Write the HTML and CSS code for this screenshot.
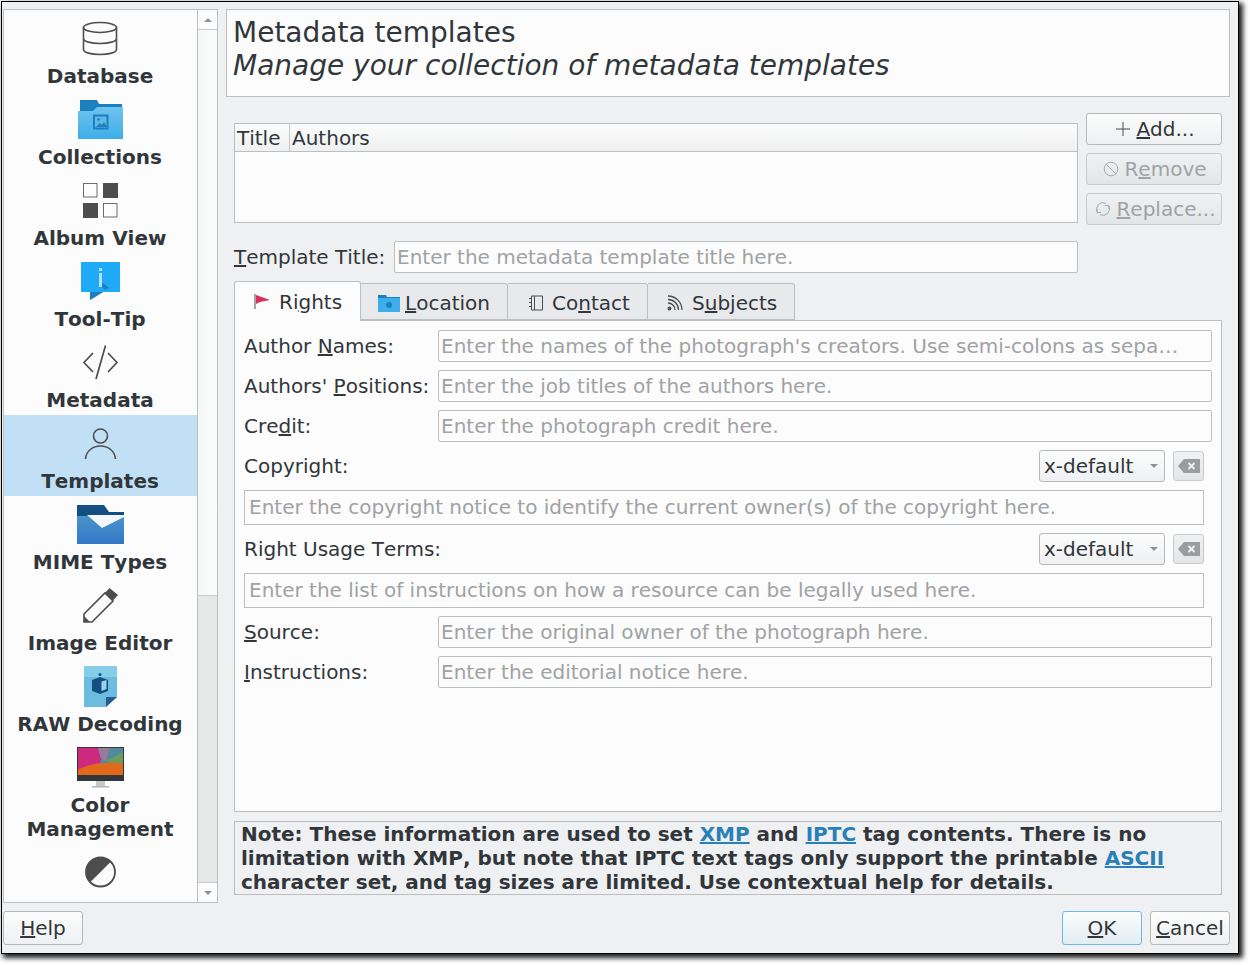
FILE: index.html
```html
<!DOCTYPE html>
<html lang="en">
<head>
<meta charset="utf-8">
<title>Metadata templates</title>
<link rel="stylesheet" href="styles.css">
</head>
<body>
<div class="window">
  <div class="top">
    <nav class="sidebar">
      <div class="list">
        <div class="item">
          <svg class="icon" viewBox="0 0 48 48" fill="none" stroke="#4d4d4d" stroke-width="1.6"><ellipse cx="24" cy="13.5" rx="16.5" ry="5"/><path d="M7.500 13.5V35.500c0 3 7.500 5 16.500 5s16.500-2 16.500-5V13.500M7.500 24.500c0 3 7.500 5 16.500 5s16.500-2 16.500-5"/></svg>
          <span>Database</span>
        </div>
        <div class="item">
          <svg class="icon" viewBox="0 0 48 48"><defs><linearGradient id="fold" x1="0" y1="0" x2="0" y2="1"><stop offset="0" stop-color="#70c2ee"/><stop offset="1" stop-color="#3daee9"/></linearGradient></defs><path d="M4 5H21L23 9H46V20H4Z" fill="#1d7fbf"/><path d="M2 16H17L21 12H47V44H2Z" fill="url(#fold)"/><rect x="18" y="20.500" width="13.500" height="13" fill="#5fb8e6" stroke="#1d7fbf" stroke-width="2"/><path d="M20 32l4-4 2 2 2-3 3 5z" fill="#1d7fbf"/><circle cx="22.500" cy="24.500" r="1.300" fill="#1d7fbf"/></svg>
          <span>Collections</span>
        </div>
        <div class="item">
          <svg class="icon" viewBox="0 0 48 48"><rect x="7.500" y="7.500" width="13.500" height="13.500" fill="none" stroke="#6b6b6b"/><rect x="27" y="7" width="15" height="15" fill="#4d4d4d"/><rect x="7" y="27" width="15" height="15" fill="#4d4d4d"/><rect x="27.500" y="27.500" width="13.500" height="13.500" fill="none" stroke="#6b6b6b"/></svg>
          <span>Album View</span>
        </div>
        <div class="item">
          <svg class="icon" viewBox="0 0 48 48"><path d="M5 5H44V35H27L14 43V35H5Z" fill="#1eaaf7"/><path d="M14 43L27 35H14Z" fill="#1d7fbf"/><path d="M24 28l3-2 6 5 -4 2z" fill="#1d7fbf"/><rect x="23" y="16" width="3" height="14" fill="#b3dff7"/><rect x="23" y="11" width="3" height="3" fill="#b3dff7"/></svg>
          <span>Tool-Tip</span>
        </div>
        <div class="item">
          <svg class="icon" viewBox="0 0 48 48" fill="none" stroke="#4d4d4d" stroke-width="1.700"><path d="M17 15L8 24.500L17 34M32 15L41 24.500L32 34M29.500 7.500L20 41"/></svg>
          <span>Metadata</span>
        </div>
        <div class="item selected">
          <svg class="icon" viewBox="0 0 48 48" fill="none" stroke="#4d4d4d" stroke-width="1.600"><circle cx="24.500" cy="17" r="7"/><path d="M9.500 40C10 32 17 27 24.500 27S39 32 39.500 40"/></svg>
          <span>Templates</span>
        </div>
        <div class="item">
          <svg class="icon" viewBox="0 0 48 48"><defs><linearGradient id="mime" x1="0" y1="0" x2="0" y2="1"><stop offset="0" stop-color="#4a94c9"/><stop offset="1" stop-color="#3278c8"/></linearGradient></defs><path d="M1 5H28L33 12H48V17H1Z" fill="#134f83"/><rect x="1" y="16" width="47" height="28" fill="url(#mime)"/><path d="M11 15H48V17L26 28Z" fill="#f4f7f9"/></svg>
          <span>MIME Types</span>
        </div>
        <div class="item">
          <svg class="icon" viewBox="0 0 48 48"><path d="M8 33L29 12L37 20L16 41H8Z" fill="none" stroke="#4d4d4d" stroke-width="1.600"/><path d="M33.500 7L42 14L37 19.500L29 12Z" fill="#4d4d4d"/><path d="M8 35L14 41H8Z" fill="#4d4d4d"/></svg>
          <span>Image Editor</span>
        </div>
        <div class="item">
          <svg class="icon" viewBox="0 0 48 48"><path d="M8 4H41V35L30 45H8Z" fill="#6bbcdf"/><rect x="8" y="4" width="33" height="11" fill="#85cde8"/><path d="M30 45V35H41Z" fill="#1d5f94"/><path d="M30 45A6 6 0 0 1 30 37Z" fill="#8fa9b8"/><path d="M16 18L24 15L32 18V29L24 32L16 29Z" fill="#134f83"/><path d="M25.500 19.500L30.500 18V27L25.500 29Z" fill="#9bd2ea"/><circle cx="24" cy="12.500" r="1.500" fill="#134f83"/></svg>
          <span>RAW Decoding</span>
        </div>
        <div class="item">
          <svg class="icon" viewBox="0 0 48 48"><rect x="1" y="4" width="47" height="34" fill="#31363b"/><rect x="2" y="5" width="45" height="27" fill="#4f8a9e"/><path d="M2 5H22L25 16L24 21L2 27Z" fill="#cd2a7f"/><path d="M22 5H34L30 18L25 16Z" fill="#9a7a9a"/><path d="M30 18L47 9V22L34 20Z" fill="#6e9a5e"/><path d="M2 32V27C12 21 30 18 47 21V32Z" fill="#e2691b"/><rect x="20" y="38" width="9" height="5" fill="#c8c9ca"/><rect x="16" y="43" width="17" height="1.500" fill="#b5b6b7"/></svg>
          <span>Color<br>Management</span>
        </div>
        <div class="item">
          <svg class="icon" viewBox="0 0 48 48"><circle cx="24.500" cy="24" r="14.500" fill="none" stroke="#4d4d4d" stroke-width="1.800"/><path d="M14.200 34.300A14.500 14.500 0 0 1 34.800 13.700Z" fill="#4d4d4d"/></svg>
        </div>
      </div>
      <div class="scrollbar">
        <div class="sb-btn"><i class="tri-up"></i></div>
        <div class="sb-thumb"></div>
        <div class="sb-track"></div>
        <div class="sb-btn sb-btn-end"><i class="tri-down"></i></div>
      </div>
    </nav>
    <main class="main">
      <header class="page-head">
        <div class="page-title">Metadata templates</div>
        <div class="page-sub">Manage your collection of metadata templates</div>
      </header>
      <div class="content">
        <div class="table-row">
          <div class="table">
            <div class="thead">
              <div class="th th-title">Title</div>
              <div class="th">Authors</div>
            </div>
          </div>
          <div class="side-buttons">
            <button class="btn side"><svg class="btn-icon" viewBox="0 0 16 16" fill="none" stroke="#4d4d4d"><path d="M8 1V15M1 8H15"/></svg><span><u>A</u>dd...</span></button>
            <button class="btn side disabled"><svg class="btn-icon" viewBox="0 0 16 16" fill="none" stroke="#a9abac"><circle cx="8" cy="8" r="6.800"/><path d="M3.200 3.200L12.800 12.800"/></svg><span>R<u>e</u>move</span></button>
            <button class="btn side disabled wide-gap"><svg class="btn-icon" viewBox="0 0 16 16" fill="none" stroke="#a9abac"><path d="M2.500 11.500A6.500 6.500 0 0 1 11 2.300M13.500 4.500A6.500 6.500 0 0 1 5 13.700M2 7.500V11.500H6M14 8.500V4.500H10"/></svg><span><u>R</u>eplace...</span></button>
          </div>
        </div>
        <div class="title-row">
          <label class="title-label"><u>T</u>emplate Title:</label>
          <input class="field" placeholder="Enter the metadata template title here.">
        </div>
        <div class="tabs">
          <div class="tab active"><svg class="tab-icon" viewBox="0 0 16 16"><path d="M1 0V15" stroke="#6b6b6b" stroke-width="1.200" fill="none"/><path d="M2 1L16 6L6 8L2 10Z" fill="#da2e5b"/></svg><span>Ri<u>g</u>hts</span></div>
          <div class="tab tab-location"><svg class="tab-icon folder" viewBox="0 0 22 18"><path d="M0 1H8L9 3H22V8H0Z" fill="#1d7fbf"/><path d="M0 4H22V18H0Z" fill="#3daee9"/><circle cx="11" cy="11" r="3" fill="#1d7fbf"/></svg><span><u>L</u>ocation</span></div>
          <div class="tab tab-contact"><svg class="tab-icon" viewBox="0 0 16 16" fill="none" stroke="#4d4d4d"><path d="M3.500 1H14.500V15H3.500ZM6.500 1V15M1 3.500H3.500M1 7.500H3.500M1 11.500H3.500"/></svg><span>Co<u>n</u>tact</span></div>
          <div class="tab tab-subjects"><svg class="tab-icon" viewBox="0 0 16 16" fill="none" stroke="#4d4d4d" stroke-width="1.300"><circle cx="2.500" cy="13.500" r="1.300" fill="#4d4d4d"/><path d="M1 8A7 7 0 0 1 8 15M1 4.500A10.500 10.500 0 0 1 11.500 15M1 1A14 14 0 0 1 15 15"/></svg><span>S<u>u</u>bjects</span></div>
        </div>
        <section class="panel">
          <div class="form-row"><label>Author <u>N</u>ames:</label><input class="field" placeholder="Enter the names of the photograph's creators. Use semi-colons as sepa…"></div>
          <div class="form-row"><label>Authors' <u>P</u>ositions:</label><input class="field" placeholder="Enter the job titles of the authors here."></div>
          <div class="form-row"><label>Cre<u>d</u>it:</label><input class="field" placeholder="Enter the photograph credit here."></div>
          <div class="lang-row">
            <label>Copyright:</label>
            <div class="combo"><span>x-default</span><i class="tri-down small"></i></div>
            <button class="clear"><svg viewBox="0 0 24 16" class="clear-icon"><path d="M7 1H23V15H7L1 8Z" fill="#9a9c9d"/><path d="M11.500 5L17.500 11M17.500 5L11.500 11" stroke="#f2f2f2" stroke-width="1.800"/></svg></button>
          </div>
          <div class="area">Enter the copyright notice to identify the current owner(s) of the copyright here.</div>
          <div class="lang-row">
            <label>Right Usage Terms:</label>
            <div class="combo"><span>x-default</span><i class="tri-down small"></i></div>
            <button class="clear"><svg viewBox="0 0 24 16" class="clear-icon"><path d="M7 1H23V15H7L1 8Z" fill="#9a9c9d"/><path d="M11.500 5L17.500 11M17.500 5L11.500 11" stroke="#f2f2f2" stroke-width="1.800"/></svg></button>
          </div>
          <div class="area">Enter the list of instructions on how a resource can be legally used here.</div>
          <div class="form-row"><label><u>S</u>ource:</label><input class="field" placeholder="Enter the original owner of the photograph here."></div>
          <div class="form-row"><label><u>I</u>nstructions:</label><input class="field" placeholder="Enter the editorial notice here."></div>
        </section>
        <div class="note">
          <div class="note-line"><span>Note: These information are used to set </span><a href="#">XMP</a><span> and </span><a href="#">IPTC</a><span> tag contents. There is no</span></div>
          <div class="note-line"><span>limitation with XMP, but note that IPTC text tags only support the printable </span><a href="#">ASCII</a></div>
          <div class="note-line"><span>character set, and tag sizes are limited. Use contextual help for details.</span></div>
        </div>
      </div>
    </main>
  </div>
  <footer class="footer">
    <button class="btn foot"><span><u>H</u>elp</span></button>
    <div class="foot-right">
      <button class="btn foot primary"><span><u>O</u>K</span></button>
      <button class="btn foot"><span><u>C</u>ancel</span></button>
    </div>
  </footer>
</div>
</body>
</html>
```
FILE: styles.css
```css
* { box-sizing: border-box; }
html, body { margin: 0; padding: 0; background: #fff; }
body { font-family: "DejaVu Sans", sans-serif; font-size: 20px; font-kerning: none; color: #31363b; width: 1250px; height: 965px; overflow: hidden; }
button, input { font-kerning: none; }
.window { margin: 1px 0 0 1px; width: 1238px; height: 953px; border: 1px solid #000; background: #eff0f1; padding: 7px 8px 7px 1px; display: flex; flex-direction: column; gap: 8px; box-shadow: 3px 3px 5px 1px rgba(0,0,0,.88); }
.top { display: flex; gap: 8px; height: 894px; }

.sidebar { width: 215px; border: 1px solid #bcbebf; background: #fcfcfc; display: flex; overflow: hidden; }
.list { flex: 1; overflow: hidden; }
.item { display: flex; flex-direction: column; align-items: center; padding: 4px 1px 3px 0; font-weight: bold; text-align: center; line-height: 24px; }
.item.selected { background: #c2e0f5; }
.icon { width: 48px; height: 48px; margin-bottom: 2px; display: block; flex: none; }

.scrollbar { width: 20px; border-left: 1px solid #bcbebf; display: flex; flex-direction: column; flex: none; }
.sb-btn { height: 20px; border-bottom: 1px solid #c8cacb; background: #fcfcfc; display: flex; align-items: center; justify-content: center; flex: none; }
.sb-btn-end { border-bottom: 0; border-top: 1px solid #c8cacb; }
.sb-thumb { height: 566px; background: linear-gradient(to right, #f6f7f7, #fcfcfc); border-bottom: 1px solid #c8cacb; flex: none; }
.sb-track { flex: 1; background: #e6e7e7; }
.tri-up, .tri-down { display: block; width: 0; height: 0; border-left: 4px solid transparent; border-right: 4px solid transparent; }
.tri-up { border-bottom: 4px solid #8f9192; }
.tri-down { border-top: 4px solid #8f9192; }

.main { width: 1004px; display: flex; flex-direction: column; }
.page-head { height: 88px; border: 1px solid #bcbebf; background: #fcfcfc; padding: 6px 6px 0; font-size: 28px; line-height: 33px; flex: none; }
.page-sub { font-style: italic; }
.content { padding: 16px 8px 0; display: flex; flex-direction: column; }

.table-row { display: flex; gap: 8px; height: 112px; }
.table { width: 844px; height: 100px; margin-top: 10px; border: 1px solid #bcbebf; background: #fcfcfc; }
.thead { display: flex; height: 28px; border-bottom: 1px solid #bcbebf; background: linear-gradient(#fcfcfc, #eff0f1); line-height: 29px; }
.th { padding: 0 2px; }
.th-title { width: 55px; border-right: 1px solid #c8cacb; }
.side-buttons { width: 136px; display: flex; flex-direction: column; gap: 8px; }

.btn { font: inherit; color: inherit; height: 32px; width: 136px; padding: 0; border: 1px solid #b6b8b9; border-radius: 3px; background: linear-gradient(#fcfcfc, #eef0f1); display: flex; align-items: center; justify-content: center; gap: 5px; }
.btn.side { padding-left: 2px; }
.btn.disabled { color: #a0a2a3; background: linear-gradient(#f0f1f2, #e4e5e6); border-color: #c8cacb; }
.btn.wide-gap { padding-left: 3px; }
.btn-icon { width: 16px; height: 16px; flex: none; }
.btn.foot { width: 80px; height: 34px; }
.btn.primary { border-color: #6ab9e6; background: linear-gradient(#fcfcfc, #e3edf2); }

.title-row { display: flex; width: 844px; align-items: center; margin-top: 16px; height: 32px; }
.title-label { width: 160px; flex: none; }
.field { font: inherit; color: inherit; height: 32px; padding: 0 2px; border: 1px solid #bcbebf; border-radius: 2px; background: #fcfcfc; flex: 1; min-width: 0; width: 100%; }
.field::placeholder { color: #a0a2a3; opacity: 1; }

.tabs { display: flex; margin-top: 8px; height: 39px; align-items: flex-end; position: relative; z-index: 1; }
.tab { height: 37px; border: 1px solid #bcbebf; border-left: 0; border-bottom: 1px solid #bcbebf; border-radius: 0 3px 0 0; background: #e8e9eb; display: flex; align-items: center; gap: 8px; padding-top: 2px; flex: none; }
.tab.active { width: 127px; height: 40px; margin-bottom: -1px; border-left: 1px solid #bcbebf; border-bottom: 0; border-radius: 3px 3px 0 0; background: #fcfcfc; padding: 0 0 0 19px; gap: 9px; }
.tab-location { width: 147px; padding-left: 17px; gap: 5px; }
.tab-contact { width: 140px; padding-left: 20px; }
.tab-subjects { width: 147px; padding-left: 19px; gap: 9px; }
.tab-icon { width: 16px; height: 16px; flex: none; }
.tab-icon.folder { width: 22px; height: 18px; }

.panel { height: 492px; border: 1px solid #bcbebf; background: #fcfcfc; padding: 9px 9px 0; display: flex; flex-direction: column; gap: 8px; }
.form-row { display: flex; align-items: center; height: 32px; flex: none; }
.form-row label { width: 194px; flex: none; }
.lang-row { display: flex; align-items: center; height: 32px; width: 960px; flex: none; }
.lang-row label { flex: 1; }
.combo { width: 126px; height: 32px; border: 1px solid #b6b8b9; border-radius: 3px; background: linear-gradient(#fcfcfc, #eef0f1); display: flex; align-items: center; justify-content: space-between; padding: 0 6px 0 4px; }
.clear { width: 31px; height: 30px; margin-left: 8px; padding: 0; border: 1px solid #c8cacb; border-radius: 3px; background: linear-gradient(#f0f1f2, #e4e5e6); display: flex; align-items: center; justify-content: center; }
.clear-icon { width: 24px; height: 16px; }
.area { width: 960px; height: 35px; border: 1px solid #bcbebf; background: #fcfcfc; color: #a0a2a3; padding: 0 4px; line-height: 33px; flex: none; }

.note { margin-top: 9px; height: 74px; border: 1px solid #bcbebf; padding: 0 6px; font-weight: bold; line-height: 24px; }
.note-line { white-space: pre; }
.note a { color: #2980b9; }

.footer { display: flex; justify-content: space-between; height: 34px; }
.foot-right { display: flex; gap: 8px; }
```
